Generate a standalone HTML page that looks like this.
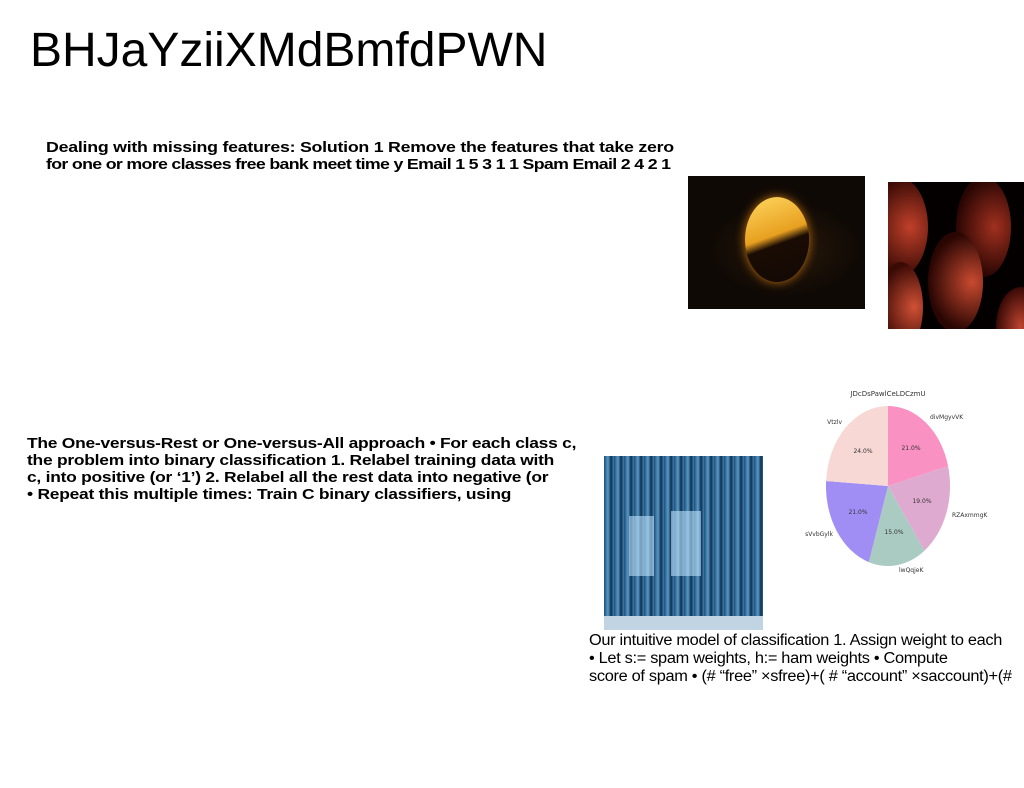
<!DOCTYPE html>
<html><head><meta charset="utf-8"><style>
body{margin:0;width:1024px;height:788px;background:#fff;position:relative;overflow:hidden;font-family:"Liberation Sans",sans-serif;color:#000}
.a{position:absolute;white-space:nowrap}
.b{font-weight:bold;font-size:14.5px;line-height:17px;letter-spacing:-0.2px;transform-origin:0 0}
</style></head><body>
<div class="a" style="left:30px;top:24px;font-size:48px;line-height:54px">BHJaYziiXMdBmfdPWN</div>
<div class="a b" style="left:46px;top:140px;transform:scaleX(1.225)">Dealing with missing features: Solution 1 Remove the features that take zero<br><span style="letter-spacing:-0.55px">for one or more classes free bank meet time y Email 1 5 3 1 1 Spam Email 2 4 2 1</span></div>
<div class="a b" style="left:27px;top:436px;transform:scaleX(1.2)">The One-versus-Rest or One-versus-All approach • For each class c,<br>the problem into binary classification 1. Relabel training data with<br>c, into positive (or ‘1’) 2. Relabel all the rest data into negative (or<br>• Repeat this multiple times: Train C binary classifiers, using</div>

<div class="a" style="left:688px;top:176px;width:177px;height:133px;background:radial-gradient(ellipse 60% 50% at 55% 55%,#2a1a0a,#0f0905 70%),#100a05;overflow:hidden">
<div style="position:absolute;left:57px;top:21px;width:64px;height:85px;border-radius:50%;background:linear-gradient(160deg,#ffd860 0%,#e8a020 45%,#1a0c04 55%,#120804 100%);box-shadow:0 0 10px #c07010"></div>
</div>
<div class="a" style="left:888px;top:182px;width:136px;height:147px;background:#050000;overflow:hidden">
<div style="position:absolute;left:-20px;top:-5px;width:60px;height:100px;border-radius:50%;background:radial-gradient(ellipse at 70% 50%,#c0402a,#3a0a05 70%)"></div>
<div style="position:absolute;left:68px;top:-5px;width:55px;height:100px;border-radius:50%;background:radial-gradient(ellipse at 70% 50%,#a0301f,#2a0603 70%)"></div>
<div style="position:absolute;left:40px;top:50px;width:55px;height:100px;border-radius:50%;background:radial-gradient(ellipse at 80% 50%,#c84a30,#2a0603 70%)"></div>
<div style="position:absolute;left:-10px;top:80px;width:45px;height:90px;border-radius:50%;background:radial-gradient(ellipse at 80% 50%,#d05035,#3a0a05 70%)"></div>
<div style="position:absolute;left:108px;top:105px;width:50px;height:80px;border-radius:50%;background:radial-gradient(ellipse at 50% 50%,#c04530,#3a0a05 70%)"></div>
</div>
<div class="a" style="left:604px;top:456px;width:159px;height:174px;background:repeating-linear-gradient(90deg,#1d4f7a 0,#5a9ac8 4px,#0e3050 7px,#3f7fb0 10px);overflow:hidden">
<div style="position:absolute;left:25px;top:60px;width:25px;height:60px;background:rgba(190,225,250,.6)"></div>
<div style="position:absolute;left:67px;top:55px;width:30px;height:65px;background:rgba(190,225,250,.6)"></div>
<div style="position:absolute;left:0;top:160px;width:159px;height:14px;background:#c0d4e4"></div>
</div>

<svg class="a" style="left:800px;top:380px" width="224" height="200" viewBox="800 380 224 200" font-family="DejaVu Sans,sans-serif" font-size="6" fill="#333">
<text x="888" y="396" text-anchor="middle" font-size="7">JDcDsPawlCeLDCzmU</text>
<path d="M888,486 L888,406 A62,80 0 0,1 948.1,466.1Z" fill="#f991c3"/>
<path d="M888,486 L948.1,466.1 A62,80 0 0,1 924.4,550.7Z" fill="#dfaad0"/>
<path d="M888,486 L924.4,550.7 A62,80 0 0,1 868.8,562.1Z" fill="#a9cbc2"/>
<path d="M888,486 L868.8,562.1 A62,80 0 0,1 826.1,481Z" fill="#a18ef5"/>
<path d="M888,486 L826.1,481 A62,80 0 0,1 888,406Z" fill="#f7d8d5"/>
<text x="911" y="450" text-anchor="middle">21.0%</text>
<text x="922" y="503" text-anchor="middle">19.0%</text>
<text x="894" y="534" text-anchor="middle">15.0%</text>
<text x="858" y="514" text-anchor="middle">21.0%</text>
<text x="863" y="453" text-anchor="middle">24.0%</text>
<text x="930" y="419">divMgyvVK</text>
<text x="952" y="517">RZAxmmgK</text>
<text x="899" y="572">lwQqjeK</text>
<text x="833" y="536" text-anchor="end">sVvbGylk</text>
<text x="842" y="424" text-anchor="end">Vtzlv</text>
</svg>

<div class="a" style="left:589px;top:632px;font-size:15.5px;line-height:18px;letter-spacing:-0.3px;transform:scaleX(1.055);transform-origin:0 0">Our intuitive model of classification 1. Assign weight to each<br>• Let s:= spam weights, h:= ham weights • Compute<br>score of spam • (# “free” ×sfree)+( # “account” ×saccount)+(#</div>
</body></html>
